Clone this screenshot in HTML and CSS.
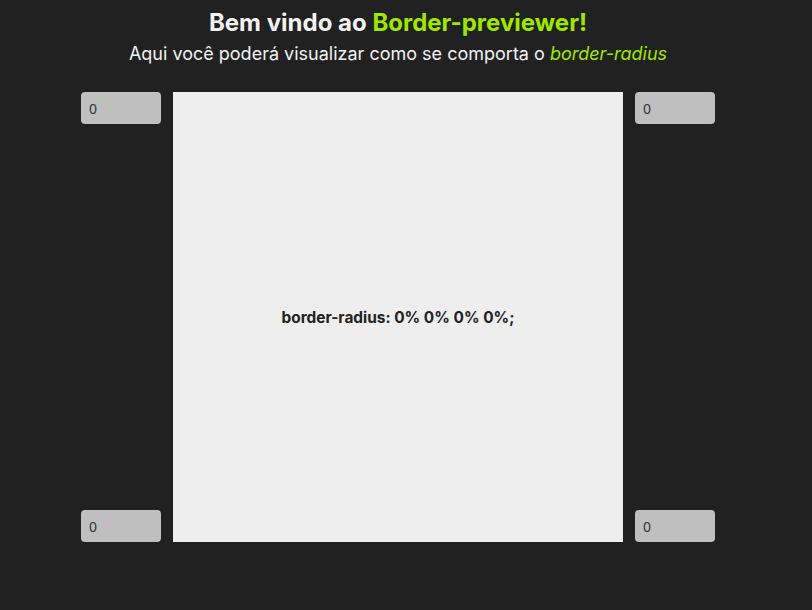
FILE: index.html
```html
<!DOCTYPE html>
<html lang="pt-BR">
<head>
<meta charset="utf-8">
<title>Border-previewer</title>
<link rel="stylesheet" href="styles.css">
</head>
<body>
<main class="page">
  <header class="header">
    <h1 class="title">Bem vindo ao <span class="accent">Border-previewer!</span></h1>
    <p class="subtitle">Aqui você poderá visualizar como se comporta o <em class="accent">border-radius</em></p>
  </header>
  <section class="editor">
    <div class="col">
      <input class="field" type="text" value="0">
      <input class="field" type="text" value="0">
    </div>
    <div class="preview">
      <p class="code">border-radius: 0% 0% 0% 0%;</p>
    </div>
    <div class="col">
      <input class="field" type="text" value="0">
      <input class="field" type="text" value="0">
    </div>
  </section>
</main>
</body>
</html>
```
FILE: styles.css
```css
html, body {
  margin: 0;
  padding: 0;
  background: #212121;
}
body {
  font-family: Inter, "Noto Sans", sans-serif;
  color: #f2f2f2;
}
.page {
  width: 796px;
  display: flex;
  flex-direction: column;
  align-items: center;
}
.header {
  text-align: center;
  padding-top: 8px;
}
.title {
  margin: 0;
  font-size: 24px;
  font-weight: 700;
  line-height: 29px;
}
.subtitle {
  margin: 6px 0 0;
  font-size: 18px;
  line-height: 22px;
}
.accent {
  color: #a1e800;
}
.editor {
  margin-top: 27px;
  display: flex;
  gap: 12px;
}
.col {
  display: flex;
  flex-direction: column;
  justify-content: space-between;
}
.field {
  box-sizing: border-box;
  width: 80px;
  height: 32px;
  border: none;
  border-radius: 4px;
  background: #bfbfbf;
  padding: 0 8px;
  font-family: "Noto Sans", sans-serif;
  font-size: 14px;
  color: #2e3440;
  outline: none;
}
.preview {
  width: 450px;
  height: 450px;
  background: #eeeeee;
  display: flex;
  align-items: center;
  justify-content: center;
}
.code {
  margin: 0;
  font-size: 15.4px;
  font-weight: 700;
  color: #222;
}
```
